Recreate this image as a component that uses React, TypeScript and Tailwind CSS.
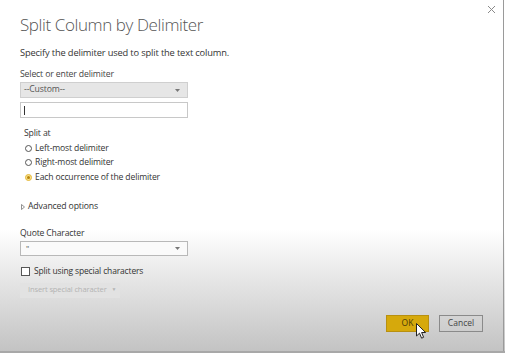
import React from "react";

const Arrow = () => (
  <svg width="5" height="3" viewBox="0 0 5 3" className="block">
    <path d="M0 0 L5 0 L2.5 3 Z" fill="#777" />
  </svg>
);

const Radio = ({ checked }: { checked?: boolean }) =>
  checked ? (
    <span className="w-[7px] h-[7px] rounded-full bg-[#f7df8c] border border-[#e5b93a] flex items-center justify-center">
      <span className="w-[3px] h-[3px] rounded-full bg-[#b8860b]" />
    </span>
  ) : (
    <span className="w-[7px] h-[7px] rounded-full border border-[#555] bg-white" />
  );

export default function App() {
  return (
    <div
      className="relative w-[505px] h-[353px] overflow-hidden bg-[linear-gradient(to_bottom,#ffffff_0%,#ffffff_65%,#c2c2c2_100%)] text-[#333]"
      style={{ fontFamily: '"Open Sans", "Noto Sans", sans-serif' }}
    >
      <div className="flex flex-col pl-[20px] pt-[13px]">
        <div className="h-[24px] leading-[24px] text-[17px] font-light text-[#555] tracking-[-0.4px] whitespace-nowrap">
          Split Column by Delimiter
        </div>
        <div className="mt-[9px] h-[14px] leading-[14px] text-[9.3px] text-[#333] tracking-[-0.15px] whitespace-nowrap">
          Specify the delimiter used to split the text column.
        </div>
        <div className="mt-[7px] h-[14px] leading-[14px] text-[8.7px] text-[#444] tracking-[-0.15px] whitespace-nowrap">
          Select or enter delimiter
        </div>
        <div className="mt-[1px] w-[168px] h-[16px] bg-[#e6e6e6] border border-[#cfcfcf] flex items-center justify-between pl-[3px] pr-[7px]">
          <span className="text-[8.7px] text-[#555] tracking-[-0.15px]">--Custom--</span>
          <Arrow />
        </div>
        <div className="mt-[4px] w-[168px] h-[16px] bg-white border border-[#c8c8c8] flex items-center pl-[3px]">
          <span className="w-[1px] h-[9px] bg-[#333]" />
        </div>
        <div className="pl-[4px] mt-[8px] h-[14px] leading-[14px] text-[8.7px] text-[#333] tracking-[-0.15px]">
          Split at
        </div>
        <div className="pl-[5px] mt-[1px] flex flex-col text-[8.6px] text-[#333] tracking-[-0.15px]">
          <div className="h-[14.5px] flex items-center gap-[3px] whitespace-nowrap">
            <Radio />
            <span>Left-most delimiter</span>
          </div>
          <div className="h-[14.5px] flex items-center gap-[3px] whitespace-nowrap">
            <Radio />
            <span>Right-most delimiter</span>
          </div>
          <div className="h-[14.5px] flex items-center gap-[3px] whitespace-nowrap">
            <Radio checked />
            <span>Each occurrence of the delimiter</span>
          </div>
        </div>
        <div className="mt-[15px] h-[14px] flex items-center gap-[3px] pl-[1px] text-[8.7px] text-[#333] tracking-[-0.15px]">
          <svg width="4" height="6" viewBox="0 0 4 6">
            <path d="M0.5 0.5 L3.5 3 L0.5 5.5 Z" fill="none" stroke="#777" strokeWidth="0.8" />
          </svg>
          <span>Advanced options</span>
        </div>
        <div className="mt-[12px] h-[14px] leading-[14px] text-[8.6px] text-[#333] tracking-[-0.15px]">
          Quote Character
        </div>
        <div className="mt-[1px] w-[168px] h-[15px] bg-[#fafafa] border border-[#b8b8b8] flex items-center justify-between pl-[5px] pr-[7px]">
          <span className="text-[8px] text-[#555] leading-none">"</span>
          <Arrow />
        </div>
        <div className="mt-[9px] h-[14px] flex items-center gap-[4px] pl-[1px] text-[8.5px] text-[#333] tracking-[-0.15px] whitespace-nowrap">
          <span className="w-[9px] h-[9px] border border-[#555] bg-white" />
          <span>Split using special characters</span>
        </div>
        <div className="mt-[4px] w-[100px] h-[15px] bg-[#e2e2e2] flex items-center pl-[8px] gap-[5px] text-[7.6px] text-[#b3b3b3] tracking-[-0.15px] whitespace-nowrap">
          <span>Insert special character</span>
          <span className="text-[5px]">▼</span>
        </div>
        <div className="mt-[17px] flex justify-end gap-[10px] pr-[22px]">
          <div className="w-[43px] h-[17px] bg-[#d6a90c] border border-[#b89010] flex items-center justify-center text-[8.5px] text-[#4a3c08]">
            OK
          </div>
          <div className="w-[44px] h-[17px] border border-[#8a8a8a] flex items-center justify-center text-[8.5px] text-[#444]">
            Cancel
          </div>
        </div>
      </div>

      {/* close X */}
      <svg className="absolute left-[487px] top-[5px]" width="9" height="9" viewBox="0 0 9 9">
        <path d="M1 1 L8 8 M8 1 L1 8" stroke="#8a8a8a" strokeWidth="1" />
      </svg>

      {/* right edge line */}
      <div className="absolute left-[503px] top-0 w-[1px] h-full bg-[#9a9a9a]" />
      <div className="absolute left-0 top-[351px] w-full h-[2px] bg-[#a8a8a8]" />

      {/* mouse cursor */}
      <svg className="absolute left-[416px] top-[323px]" width="11" height="17" viewBox="0 0 11 17">
        <path
          d="M0.5 0.5 L0.5 13 L3.5 10.2 L5.6 15.2 L7.6 14.3 L5.6 9.5 L9.6 9.5 Z"
          fill="#fff"
          stroke="#222"
          strokeWidth="1"
          strokeLinejoin="round"
        />
      </svg>
    </div>
  );
}
